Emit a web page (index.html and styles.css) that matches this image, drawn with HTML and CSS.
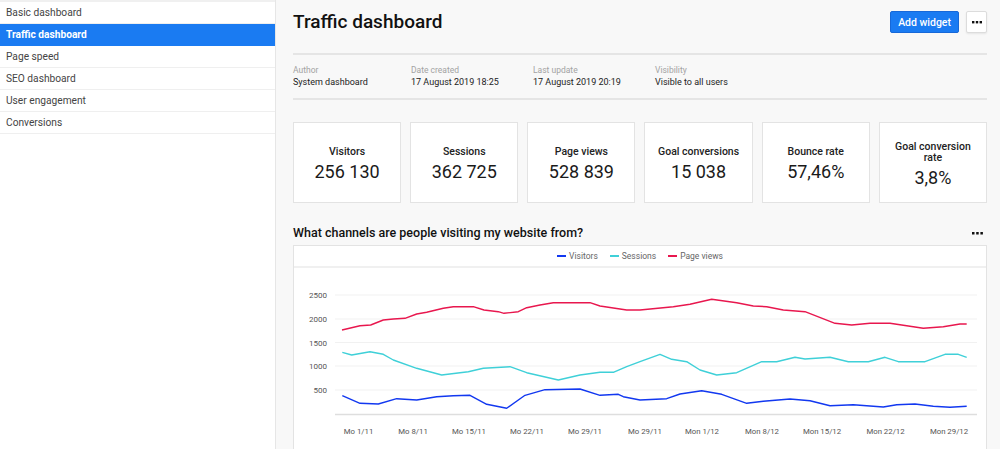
FILE: index.html
```html
<!DOCTYPE html>
<html lang="en">
<head>
<meta charset="utf-8">
<title>Traffic dashboard</title>
<link rel="stylesheet" href="styles.css">
</head>
<body>
<aside class="sidebar">
  <ul class="nav">
    <li class="nav-item">Basic dashboard</li>
    <li class="nav-item is-active">Traffic dashboard</li>
    <li class="nav-item">Page speed</li>
    <li class="nav-item">SEO dashboard</li>
    <li class="nav-item">User engagement</li>
    <li class="nav-item">Conversions</li>
  </ul>
</aside>
<main class="main">
  <header class="header">
    <h1 class="title">Traffic dashboard</h1>
    <div class="actions">
      <button class="btn-primary">Add widget</button>
      <button class="btn-more" aria-label="More">
        <svg width="10" height="3" viewBox="0 0 10 3"><rect x="0" y="0" width="2.4" height="2.4" fill="#111"/><rect x="3.8" y="0" width="2.4" height="2.4" fill="#111"/><rect x="7.6" y="0" width="2.4" height="2.4" fill="#111"/></svg>
      </button>
    </div>
  </header>
  <section class="meta">
    <div class="meta-col"><div class="meta-label">Author</div><div class="meta-value">System dashboard</div></div>
    <div class="meta-col"><div class="meta-label">Date created</div><div class="meta-value">17 August 2019 18:25</div></div>
    <div class="meta-col"><div class="meta-label">Last update</div><div class="meta-value">17 August 2019 20:19</div></div>
    <div class="meta-col"><div class="meta-label">Visibility</div><div class="meta-value">Visible to all users</div></div>
  </section>
  <section class="cards">
    <div class="card"><div class="card-label">Visitors</div><div class="card-value">256 130</div></div>
    <div class="card"><div class="card-label">Sessions</div><div class="card-value">362 725</div></div>
    <div class="card"><div class="card-label">Page views</div><div class="card-value">528 839</div></div>
    <div class="card"><div class="card-label">Goal conversions</div><div class="card-value">15 038</div></div>
    <div class="card"><div class="card-label">Bounce rate</div><div class="card-value">57,46%</div></div>
    <div class="card"><div class="card-label">Goal conversion rate</div><div class="card-value">3,8%</div></div>
  </section>
  <section class="chart-section">
    <div class="chart-head">
      <h2 class="chart-title">What channels are people visiting my website from?</h2>
      <svg class="chart-dots" width="11" height="3" viewBox="0 0 11 3"><rect x="0" y="0" width="2.5" height="2.5" fill="#111"/><rect x="4.2" y="0" width="2.5" height="2.5" fill="#111"/><rect x="8.4" y="0" width="2.5" height="2.5" fill="#111"/></svg>
    </div>
    <div class="panel">
      <div class="legend">
        <span class="legend-item"><i class="swatch swatch-blue"></i>Visitors</span>
        <span class="legend-item"><i class="swatch swatch-cyan"></i>Sessions</span>
        <span class="legend-item"><i class="swatch swatch-red"></i>Page views</span>
      </div>
      <svg class="chart" width="692" height="182" viewBox="294 268 692 182">
        <g class="grid">
          <line x1="335" y1="295" x2="977" y2="295"/>
          <line x1="335" y1="319" x2="977" y2="319"/>
          <line x1="335" y1="342.5" x2="977" y2="342.5"/>
          <line x1="335" y1="366" x2="977" y2="366"/>
          <line x1="335" y1="390" x2="977" y2="390"/>
        </g>
        <line class="axis" x1="335" y1="414.5" x2="977" y2="414.5"/>
        <g class="ylabels">
          <text x="327" y="298">2500</text>
          <text x="327" y="322">2000</text>
          <text x="327" y="345.5">1500</text>
          <text x="327" y="369">1000</text>
          <text x="327" y="393">500</text>
        </g>
        <g class="xlabels">
          <text x="358.5" y="434">Mo 1/11</text>
          <text x="413" y="434">Mo 8/11</text>
          <text x="469" y="434">Mo 15/11</text>
          <text x="527" y="434">Mo 22/11</text>
          <text x="585" y="434">Mo 29/11</text>
          <text x="645" y="434">Mo 29/11</text>
          <text x="702" y="434">Mon 1/12</text>
          <text x="762" y="434">Mon 8/12</text>
          <text x="822" y="434">Mon 15/12</text>
          <text x="885.5" y="434">Mon 22/12</text>
          <text x="949" y="434">Mon 29/12</text>
        </g>
        <polyline class="line line-red" points="342,330 360,325.7 370.7,325 383.3,320 393.3,319 405,318.3 416.7,314 426.7,312.3 443.3,308.3 453.3,306.7 473.3,306.7 484,310 498.3,311.7 504,313.3 518.3,311.7 526.7,307.7 540,305 553.3,302.7 590,302.7 600,306 626.7,310 640,310 673.3,306.7 690,304.3 711.7,299.3 736.7,302.7 753.3,306 766.7,306.7 783.3,310 805,311.7 835,323.3 851.7,325 870,323.3 890,323.3 923.3,328.3 943.3,326.7 960,324 966.7,324"/>
        <polyline class="line line-cyan" points="342.3,352.3 351.7,355 370,351.7 383.3,354.3 393.3,360 416.7,368.3 441.7,375 460,372.7 468.3,371.7 483.3,368.3 510,366.7 526.7,372.7 558.3,380 580,375 600,372.3 613.3,372.3 626.7,366.7 640,361.7 660,354.3 671.7,359.3 686.7,361.7 700,370 716.7,375 736.7,372.7 761.7,361.7 776.7,361.7 795,357.3 805,359 830,357.3 848.3,361.7 868.3,361.7 885,357.3 898.3,361.7 925,361.7 945,354.3 958.3,354.3 966.7,357.3"/>
        <polyline class="line line-blue" points="342.3,395.7 360,403.3 378.3,404 396.7,398.7 416.7,400 436.7,396.7 453.3,395.7 470,395.3 486.7,404.3 506.7,408.3 525,395.3 545,389.7 580,389 600,395.3 618.3,394.3 623.3,396.7 640,400 666.7,398.7 680,394 701.7,390.7 721.7,394.3 746.7,403.3 763.3,401.3 790,399 810,400.7 830,405.7 853.3,404.7 883.3,407 896.7,404.7 915,404 933.3,406.3 950,407.3 966.7,406.3"/>
      </svg>
    </div>
  </section>
</main>
</body>
</html>
```

FILE: styles.css
```css
* { box-sizing: border-box; }

html, body {
  margin: 0;
  padding: 0;
  height: 449px;
  overflow: hidden;
}

body {
  display: flex;
  font-family: Roboto, "Noto Sans", "Liberation Sans", sans-serif;
  background: #f8f8f8;
  color: #222;
}

.sidebar {
  flex: none;
  width: 276px;
  background: #fff;
  border-right: 1px solid #e6e6e6;
}

.nav {
  list-style: none;
  margin: 0;
  padding: 0;
  border-top: 2px solid #f0f0f0;
}

.nav-item {
  height: 22px;
  line-height: 21px;
  padding-left: 6px;
  font-size: 10.2px;
  color: #444;
  border-bottom: 1px solid #efefef;
}

.nav-item.is-active {
  background: #1a7bf2;
  color: #fff;
  font-weight: 700;
  border-bottom-color: #1a7bf2;
}

.main {
  flex: 1;
  min-width: 0;
  padding: 0 13px 0 17px;
  display: flex;
  flex-direction: column;
}

.header {
  display: flex;
  align-items: center;
  justify-content: space-between;
  padding-top: 11px;
  height: 33px;
  margin-bottom: 20px;
}

.title {
  margin: 0;
  font-size: 19px;
  line-height: 22px;
  font-weight: 500;
  color: #111;
}

.actions {
  display: flex;
  gap: 7px;
}

.btn-primary {
  height: 22px;
  padding: 0 7px;
  border: 1px solid #1768d8;
  border-radius: 2px;
  background: #1a7bf2;
  color: #fff;
  font-family: inherit;
  font-size: 10.5px;
  font-weight: 500;
}

.btn-more {
  width: 21px;
  height: 22px;
  padding: 0;
  border: 1px solid #dcdcdc;
  border-radius: 2px;
  background: #fff;
  box-shadow: 0 1px 2px rgba(0, 0, 0, 0.08);
  display: flex;
  align-items: center;
  justify-content: center;
}

.meta {
  display: grid;
  grid-template-columns: 118px 122px 122px auto;
  padding: 9px 0 10px;
  border-top: 2px solid #e5e5e5;
  border-bottom: 2px solid #e5e5e5;
}

.meta-label {
  font-size: 8.5px;
  line-height: 12px;
  color: #a3a3a3;
}

.meta-value {
  font-size: 9px;
  line-height: 12px;
  color: #222;
}

.cards {
  display: grid;
  grid-template-columns: repeat(6, 1fr);
  gap: 9px;
  margin-top: 22px;
}

.card {
  height: 81px;
  background: #fff;
  border: 1px solid #e3e3e3;
  display: flex;
  flex-direction: column;
  align-items: center;
  justify-content: center;
  text-align: center;
  padding: 4px 10px 0;
}

.card-label {
  font-size: 10.5px;
  line-height: 11.5px;
  font-weight: 500;
  color: #222;
}

.card-value {
  margin-top: 3px;
  font-size: 18px;
  line-height: 22px;
  color: #1a1a1a;
}

.chart-section {
  margin-top: 22px;
  display: flex;
  flex-direction: column;
  flex: 1;
}

.chart-head {
  display: flex;
  align-items: center;
  justify-content: space-between;
  height: 16px;
  margin-bottom: 4px;
  padding-right: 4px;
}

.chart-title {
  margin: 0;
  font-size: 12.5px;
  line-height: 16px;
  font-weight: 500;
  color: #111;
}

.panel {
  flex: 1;
  background: #fff;
  border: 1px solid #e3e3e3;
  border-bottom: none;
}

.legend {
  height: 22px;
  display: flex;
  align-items: center;
  justify-content: center;
  gap: 12px;
  border-bottom: 2px solid #f0f0f0;
  font-size: 8.5px;
  color: #666;
}

.legend-item {
  display: flex;
  align-items: center;
  gap: 3px;
}

.swatch {
  display: block;
  width: 9px;
  height: 1.5px;
}

.swatch-blue { background: #1238f0; }
.swatch-cyan { background: #3fd0d8; }
.swatch-red { background: #e8174e; }

.chart {
  display: block;
}

.grid line {
  stroke: #f1f1f1;
  stroke-width: 1;
}

.axis {
  stroke: #dedede;
  stroke-width: 1.5;
}

.ylabels text {
  font-family: Roboto, "Noto Sans", sans-serif;
  font-size: 8px;
  fill: #555;
  text-anchor: end;
}

.xlabels text {
  font-family: Roboto, "Noto Sans", sans-serif;
  font-size: 7.8px;
  fill: #555;
  text-anchor: middle;
}

.line {
  fill: none;
  stroke-width: 1.4;
  stroke-linejoin: round;
}

.line-red { stroke: #e8174e; }
.line-cyan { stroke: #3fd0d8; }
.line-blue { stroke: #1238f0; }
```
